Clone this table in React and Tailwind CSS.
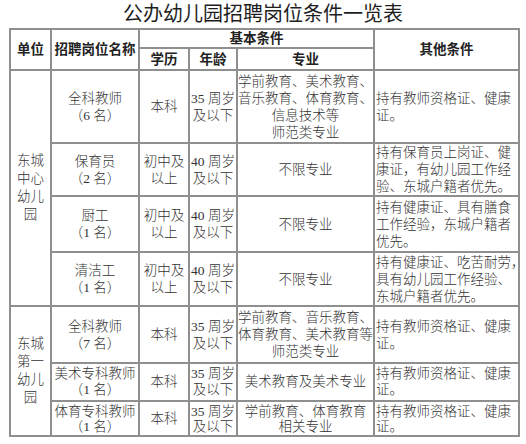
import React from "react";

const B = "border-2 border-[#8f8f8f] p-0 align-middle";

function Lines({ lines, lh = "h-[17px] leading-[17px]" }) {
  return lines.map((l, i) => (
    <div key={i} className={`${lh} whitespace-nowrap`}>
      {l}
    </div>
  ));
}

const rows1 = [
  {
    h: "h-[73px]",
    name: ["全科教师", "（6 名）"],
    edu: ["本科"],
    age: ["35 周岁", "及以下"],
    major: ["学前教育、美术教育、", "音乐教育、体育教育、", "信息技术等", "师范类专业"],
    other: ["持有教师资格证、健康", "证。"],
  },
  {
    h: "h-[53px]",
    name: ["保育员", "（2 名）"],
    edu: ["初中及", "以上"],
    age: ["40 周岁", "及以下"],
    major: ["不限专业"],
    other: ["持有保育员上岗证、健", "康证，有幼儿园工作经", "验、东城户籍者优先。"],
  },
  {
    h: "h-[56px]",
    name: ["厨工", "（1 名）"],
    edu: ["初中及", "以上"],
    age: ["40 周岁", "及以下"],
    major: ["不限专业"],
    other: ["持有健康证、具有膳食", "工作经验，东城户籍者", "优先。"],
  },
  {
    h: "h-[54px]",
    name: ["清洁工", "（1 名）"],
    edu: ["初中及", "以上"],
    age: ["40 周岁", "及以下"],
    major: ["不限专业"],
    other: ["持有健康证、吃苦耐劳，", "具有幼儿园工作经验、", "东城户籍者优先。"],
  },
];

const rows2 = [
  {
    h: "h-[57px]",
    lh: "h-[17px] leading-[17px]",
    name: ["全科教师", "（7 名）"],
    edu: ["本科"],
    age: ["35 周岁", "及以下"],
    major: ["学前教育、音乐教育、", "体育教育、美术教育等", "师范类专业"],
    other: ["持有教师资格证、健康", "证。"],
  },
  {
    h: "h-[38px]",
    lh: "h-[16px] leading-[16px]",
    name: ["美术专科教师", "（1 名）"],
    edu: ["本科"],
    age: ["35 周岁", "及以下"],
    major: ["美术教育及美术专业"],
    other: ["持有教师资格证、健康", "证。"],
  },
  {
    h: "h-[35px]",
    lh: "h-[15px] leading-[15px]",
    name: ["体育专科教师", "（1 名）"],
    edu: ["本科"],
    age: ["35 周岁", "及以下"],
    major: ["学前教育、体育教育", "相关专业"],
    other: ["持有教师资格证、健康", "证。"],
  },
];

function Row({ r, unit }) {
  return (
    <tr className={r.h}>
      {unit}
      <td className={`${B} text-center`}><Lines lines={r.name} lh={r.lh} /></td>
      <td className={`${B} text-center`}><Lines lines={r.edu} lh={r.lh} /></td>
      <td className={`${B} text-center`}><Lines lines={r.age} lh={r.lh} /></td>
      <td className={`${B} text-center`}><Lines lines={r.major} lh={r.lh} /></td>
      <td className={`${B} text-left pl-[1px]`}><Lines lines={r.other} lh={r.lh} /></td>
    </tr>
  );
}

export default function App() {
  return (
    <div className="w-[526px] h-[444px] bg-white text-[#333] text-[13.5px] leading-[17px] font-['Liberation_Serif','Noto_Sans_CJK_SC',serif] font-light">
      <div className="h-[28px] text-center text-[20px] leading-[28px] text-[#1e1e1e] font-normal">
        公办幼儿园招聘岗位条件一览表
      </div>
      <table className="ml-[9px] w-[509px] table-fixed border-collapse">
        <colgroup>
          <col className="w-[41px]" />
          <col className="w-[88px]" />
          <col className="w-[50px]" />
          <col className="w-[48px]" />
          <col className="w-[137px]" />
          <col className="w-[145px]" />
        </colgroup>
        <tbody>
          <tr className="h-[19px] text-[#222] font-semibold">
            <td rowSpan={2} className={`${B} text-center`}><Lines lines={["单位"]} /></td>
            <td rowSpan={2} className={`${B} text-center`}><Lines lines={["招聘岗位名称"]} /></td>
            <td colSpan={3} className={`${B} text-center`}><Lines lines={["基本条件"]} lh="h-[16px] leading-[16px]" /></td>
            <td rowSpan={2} className={`${B} text-center`}><Lines lines={["其他条件"]} /></td>
          </tr>
          <tr className="h-[22px] text-[#222] font-semibold">
            <td className={`${B} text-center`}><Lines lines={["学历"]} /></td>
            <td className={`${B} text-center`}><Lines lines={["年龄"]} /></td>
            <td className={`${B} text-center`}><Lines lines={["专业"]} /></td>
          </tr>
          {rows1.map((r, i) => (
            <Row
              key={i}
              r={r}
              unit={
                i === 0 ? (
                  <td rowSpan={4} className={`${B} text-center`}>
                    <Lines lines={["东城", "中心", "幼儿", "园"]} lh="h-[18px] leading-[18px]" />
                  </td>
                ) : null
              }
            />
          ))}
          {rows2.map((r, i) => (
            <Row
              key={i}
              r={r}
              unit={
                i === 0 ? (
                  <td rowSpan={3} className={`${B} text-center`}>
                    <Lines lines={["东城", "第一", "幼儿", "园"]} lh="h-[18px] leading-[18px]" />
                  </td>
                ) : null
              }
            />
          ))}
        </tbody>
      </table>
    </div>
  );
}
